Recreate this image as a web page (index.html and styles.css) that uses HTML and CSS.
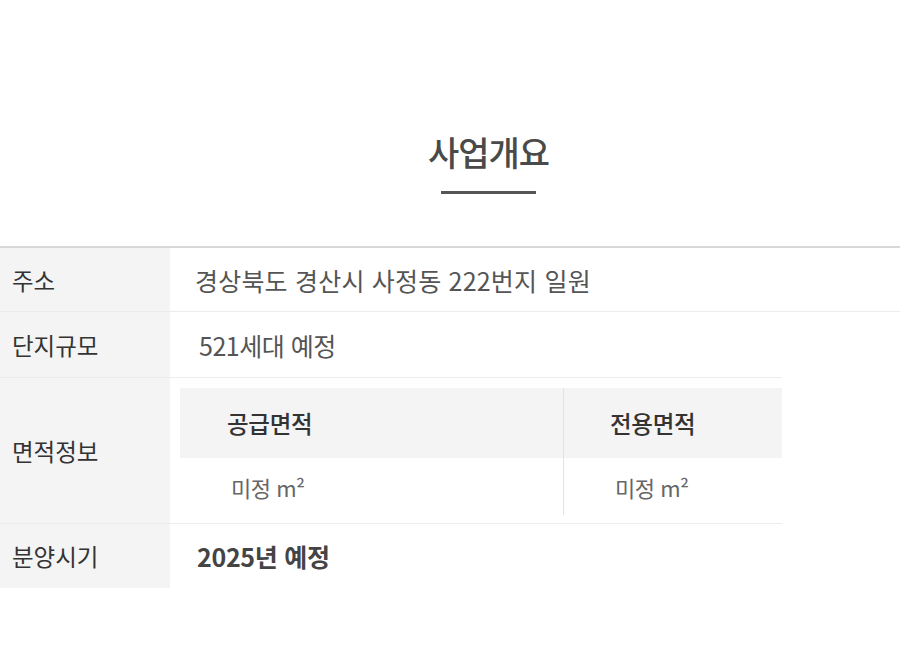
FILE: index.html
```html
<!DOCTYPE html>
<html lang="ko">
<head>
<meta charset="utf-8">
<link rel="stylesheet" href="styles.css">
</head>
<body>
<section class="overview">
  <div class="heading">
    <h2 class="title">사업개요</h2>
    <span class="bar"></span>
  </div>
  <div class="info">
    <div class="row row-full line">
      <div class="label">주소</div>
      <div class="value">경상북도 경산시 사정동 222번지 일원</div>
    </div>
    <div class="row row-full">
      <div class="label">단지규모</div>
      <div class="value v2">521세대 예정</div>
    </div>
    <div class="row row-part boxed">
      <div class="label">면적정보</div>
      <div class="value inner-wrap">
        <div class="inner">
          <div class="ih c1">공급면적</div>
          <div class="ih c2">전용면적</div>
          <div class="ib c1">미정 m²</div>
          <div class="ib c2">미정 m²</div>
        </div>
      </div>
    </div>
    <div class="row row-part">
      <div class="label">분양시기</div>
      <div class="value strong">2025년 예정</div>
    </div>
  </div>
</section>
</body>
</html>
```

FILE: styles.css
```css
html, body {
  margin: 0;
  padding: 0;
  background: #fff;
}
body {
  font-family: "Noto Sans CJK KR", "Noto Sans", sans-serif;
  color: #333;
}
.heading {
  display: flex;
  flex-direction: column;
  align-items: center;
  padding-top: 127px;
  padding-left: 77px;
}
.title {
  margin: 0;
  font-size: 34px;
  font-weight: 500;
  line-height: 50px;
  color: #4a4a4a;
  letter-spacing: -1px;
}
.bar {
  display: block;
  width: 95px;
  height: 3px;
  background: #555;
  margin-top: 14px;
}
.info {
  margin-top: 52px;
  border-top: 2px solid #d8d8d8;
}
.row {
  display: grid;
  grid-template-columns: 170px 1fr;
}
.row-full { width: 900px; }
.row-part { width: 782px; }
.line { border-bottom: 1px solid #ececec; }
.boxed {
  border-top: 1px solid #ececec;
  border-bottom: 1px solid #ececec;
}
.label {
  background: #f4f4f4;
  display: flex;
  align-items: center;
  padding-left: 12px;
  font-size: 23.5px;
  letter-spacing: 0;
  color: #333;
}
.value {
  display: flex;
  align-items: center;
  padding-left: 25px;
  font-size: 25px;
  letter-spacing: 0.2px;
  color: #555;
}
.row-full .label, .row-full .value { height: 63px; }
.row-full + .row-full .label, .row-full + .row-full .value { height: 65px; }
.v2 { padding-left: 29px; letter-spacing: -0.5px; }
.strong {
  font-weight: 700;
  color: #444;
  padding-left: 27px;
  height: 64px;
  letter-spacing: -0.3px;
}
.row-part:last-child .label { height: 64px; }
.inner-wrap {
  padding: 10px 0 8px 10px;
  letter-spacing: 0;
}
.inner {
  display: grid;
  grid-template-columns: 383px 219px;
  grid-template-rows: 70px 57px;
  width: 602px;
}
.ih {
  background: #f4f4f4;
  display: flex;
  align-items: center;
  font-size: 23.5px;
  font-weight: 500;
  color: #333;
  letter-spacing: -0.3px;
}
.ib {
  display: flex;
  align-items: center;
  font-size: 22px;
  color: #666;
  letter-spacing: -0.5px;
}
.ih.c1 { padding-left: 47px; }
.ib.c1 { padding-left: 51px; }
.c2 { border-left: 1px solid #e3e3e3; }
.ih.c2 { padding-left: 46px; }
.ib.c2 { padding-left: 51px; }
```
